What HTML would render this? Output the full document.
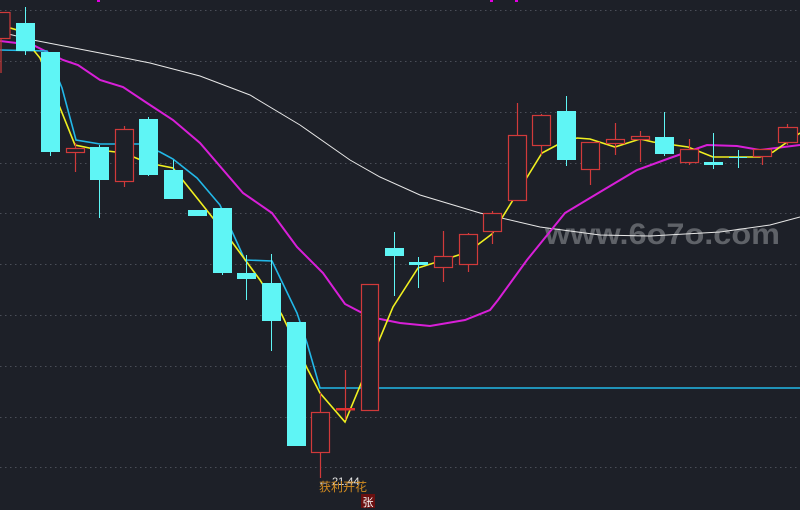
<!DOCTYPE html>
<html><head><meta charset="utf-8"><style>
html,body{margin:0;padding:0;background:#1d2028;}
svg{display:block}
</style></head><body>
<svg width="800" height="510" viewBox="0 0 800 510" xmlns="http://www.w3.org/2000/svg">
<rect width="800" height="510" fill="#1d2028"/>
<g stroke="#4a4e58" stroke-width="1" stroke-dasharray="1.5,3.5">
<line x1="0" y1="10.5" x2="800" y2="10.5"/><line x1="0" y1="61.5" x2="800" y2="61.5"/>
<line x1="0" y1="112.5" x2="800" y2="112.5"/><line x1="0" y1="163.5" x2="800" y2="163.5"/>
<line x1="0" y1="213.5" x2="800" y2="213.5"/><line x1="0" y1="264.5" x2="800" y2="264.5"/>
<line x1="0" y1="315.5" x2="800" y2="315.5"/><line x1="0" y1="366.5" x2="800" y2="366.5"/>
<line x1="0" y1="417.5" x2="800" y2="417.5"/><line x1="0" y1="467.5" x2="800" y2="467.5"/>
</g>
<g fill="#e000e0"><rect x="97" y="0" width="3" height="2"/><rect x="490" y="0" width="3" height="2"/><rect x="515" y="0" width="3" height="2"/></g>
<text x="545" y="244" textLength="235" lengthAdjust="spacingAndGlyphs" font-family="Liberation Sans, sans-serif" font-weight="bold" font-size="30" fill="#5f6268">www.6o7o.com</text>
<!-- white MA60 -->
<polyline fill="none" stroke="#e8e8e8" stroke-width="1" points="0,32 33,40 100,53 150,63 200,76 250,95 300,125 350,160 380,177 420,195 480,213 540,227 600,235 650,236 720,232 770,225 800,217"/>
<!-- magenta MA20 -->
<polyline fill="none" stroke="#d81fd8" stroke-width="2" points="0,41 33,45 63,60 78,65 100,80 123,87 147,103 173,120 200,143 243,193 272,213 297,247 323,273 345,304 370,317 400,323 430,326 465,320 490,310 498,300 527,260 565,213 600,192 637,170 670,158 707,145 737,146 760,150 800,145"/>
<!-- cyan MA10 -->
<polyline fill="none" stroke="#22b8e8" stroke-width="1.6" points="0,50 47,51 62,88 76,140 100,144 140,144 160,152 173,159 197,178 220,205 245,260 272,261 297,313 307,343 320,388 800,388"/>
<!-- yellow MA5 -->
<polyline fill="none" stroke="#f0f020" stroke-width="1.6" points="0,25 17,30 40,58 75,145 99,150 124,153 148,163 173,168 197,198 232,242 260,280 282,315 307,368 320,393 345,422 393,307 418,268 468,252 492,234 513,200 542,153 557,145 577,138 590,139 615,147 640,139 653,142 688,147 713,157 760,157 773,152 800,133"/>
<!-- candles -->
<g stroke="#d03a3a" stroke-width="1.2" fill="#1d2028">
<line x1="1" y1="38" x2="1" y2="73"/><rect x="-10" y="12.5" width="20" height="26"/>
<line x1="75.5" y1="143" x2="75.5" y2="172"/><rect x="66.5" y="148.5" width="18" height="4"/>
<line x1="124.5" y1="126" x2="124.5" y2="187"/><rect x="115.5" y="129.5" width="18" height="52"/>
<line x1="320.5" y1="393" x2="320.5" y2="478"/><rect x="311.5" y="412.5" width="18" height="40"/>
<line x1="345.5" y1="370" x2="345.5" y2="420"/>
<line x1="369.5" y1="284" x2="369.5" y2="411"/><rect x="361.5" y="284.5" width="17" height="126"/>
<line x1="443.5" y1="231" x2="443.5" y2="282"/><rect x="434.5" y="256.5" width="18" height="11"/>
<line x1="468.5" y1="233" x2="468.5" y2="272"/><rect x="459.5" y="234.5" width="18" height="30"/>
<line x1="492.5" y1="211" x2="492.5" y2="244"/><rect x="483.5" y="213.5" width="18" height="18"/>
<line x1="517.5" y1="103" x2="517.5" y2="200"/><rect x="508.5" y="135.5" width="18" height="65"/>
<line x1="541.5" y1="114" x2="541.5" y2="155"/><rect x="532.5" y="115.5" width="18" height="30"/>
<line x1="590.5" y1="142" x2="590.5" y2="185"/><rect x="581.5" y="142.5" width="18" height="27"/>
<line x1="615.5" y1="123" x2="615.5" y2="155"/><rect x="606.5" y="139.5" width="18" height="4"/>
<line x1="640.5" y1="131" x2="640.5" y2="162"/><rect x="631.5" y="136.5" width="18" height="3"/>
<line x1="689.5" y1="139" x2="689.5" y2="165"/><rect x="680.5" y="149.5" width="18" height="13"/>
<line x1="762.5" y1="149" x2="762.5" y2="165"/><rect x="753.5" y="149.5" width="18" height="7"/>
<line x1="787.5" y1="124" x2="787.5" y2="145"/><rect x="778.5" y="127.5" width="19" height="15"/>
</g>
<rect x="336" y="408" width="19" height="2.5" fill="#e03030"/>
<g stroke="#5ff5f5" stroke-width="1" fill="#5ff5f5">
<line x1="25.5" y1="7" x2="25.5" y2="55"/><rect x="16" y="23" width="19" height="28" stroke="none"/>
<line x1="50.5" y1="52" x2="50.5" y2="156"/><rect x="41" y="52" width="19" height="100" stroke="none"/>
<line x1="99.5" y1="145" x2="99.5" y2="218"/><rect x="90" y="147" width="19" height="33" stroke="none"/>
<line x1="148.5" y1="117" x2="148.5" y2="176"/><rect x="139" y="119" width="19" height="56" stroke="none"/>
<line x1="173.5" y1="160" x2="173.5" y2="199"/><rect x="164" y="170" width="19" height="29" stroke="none"/>
<rect x="188" y="210" width="19" height="6" stroke="none"/>
<line x1="222.5" y1="208" x2="222.5" y2="275"/><rect x="213" y="208" width="19" height="65" stroke="none"/>
<line x1="246.5" y1="255" x2="246.5" y2="300"/><rect x="237" y="273" width="19" height="6" stroke="none"/>
<line x1="271.5" y1="254" x2="271.5" y2="351"/><rect x="262" y="283" width="19" height="38" stroke="none"/>
<rect x="287" y="322" width="19" height="124" stroke="none"/>
<line x1="394.5" y1="232" x2="394.5" y2="296"/><rect x="385" y="248" width="19" height="8" stroke="none"/>
<line x1="418.5" y1="257" x2="418.5" y2="288"/><rect x="409" y="262" width="19" height="3" stroke="none"/>
<line x1="566.5" y1="96" x2="566.5" y2="166"/><rect x="557" y="111" width="19" height="49" stroke="none"/>
<line x1="664.5" y1="112" x2="664.5" y2="156"/><rect x="655" y="137" width="19" height="17" stroke="none"/>
<line x1="713.5" y1="133" x2="713.5" y2="169"/><rect x="704" y="162" width="19" height="3" stroke="none"/>
<line x1="738.5" y1="150" x2="738.5" y2="168"/><line x1="729" y1="157.5" x2="747" y2="157.5"/>
</g>
<text x="318" y="485" font-family="Liberation Sans, sans-serif" font-size="11" fill="#e8e8e8">← 21.44</text>
<text x="319" y="491" font-family="Liberation Sans, 'Noto Sans CJK SC', sans-serif" font-size="12" fill="#d08a20">获利开花</text>
<rect x="361" y="494" width="14" height="14" fill="#6a1010"/>
<text x="368" y="506" text-anchor="middle" font-family="Liberation Sans, 'Noto Sans CJK SC', sans-serif" font-size="11" fill="#ffffff">张</text>
</svg>
</body></html>
